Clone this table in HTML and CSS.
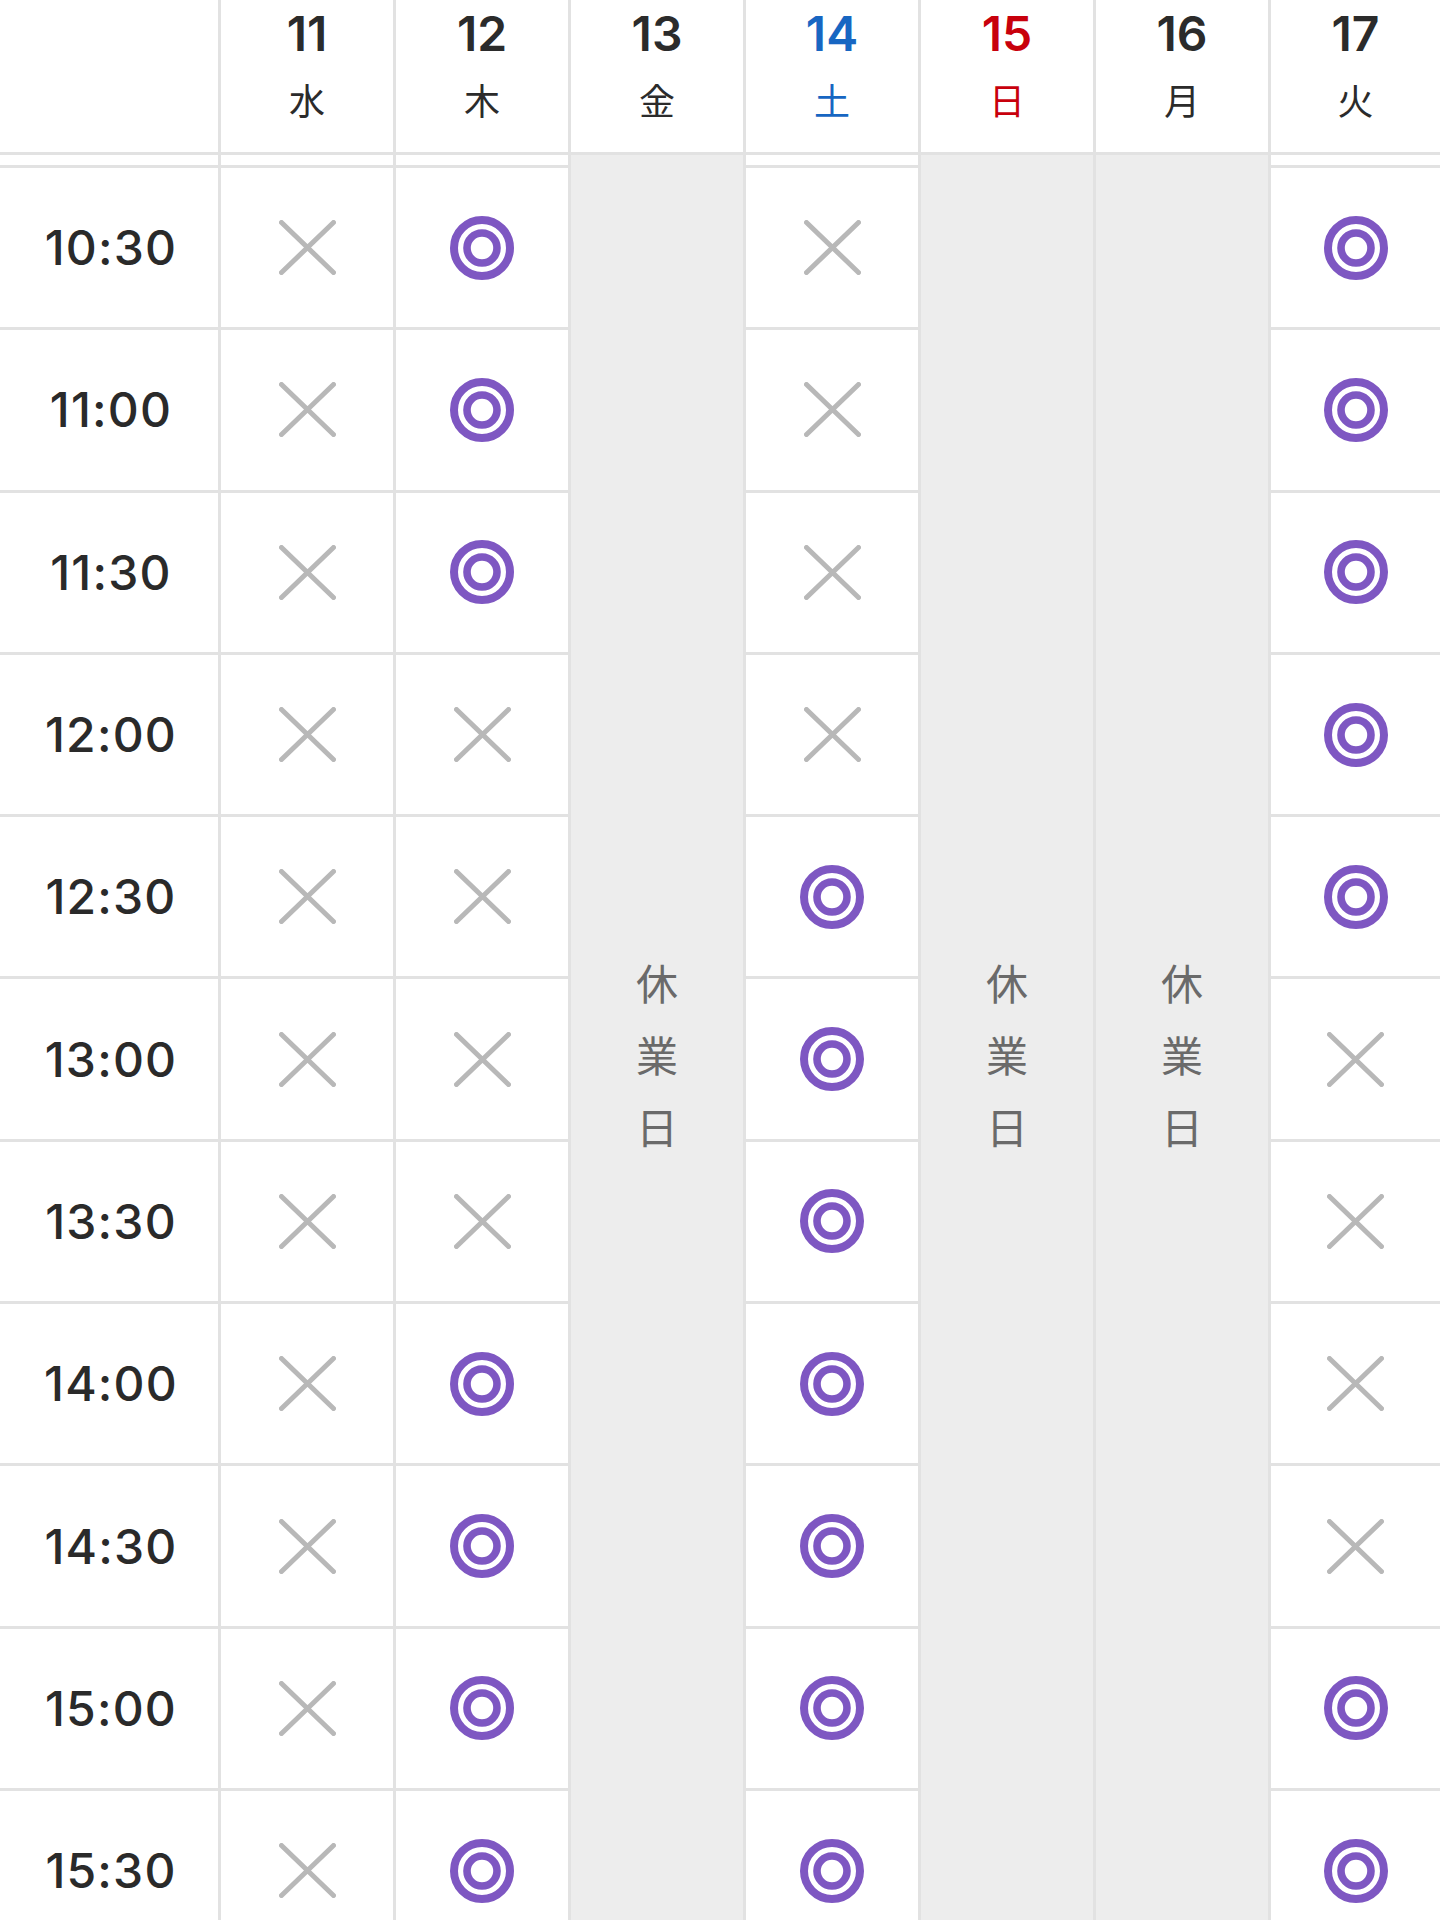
FILE: index.html
```html
<!DOCTYPE html>
<html lang="ja">
<head>
<meta charset="utf-8">
<title>予約状況</title>
<link rel="stylesheet" href="styles.css">
</head>
<body>
<div class="schedule">
  <div class="cell head"></div>
  <div class="cell head"><span class="day">11</span><span class="wd">水</span></div>
  <div class="cell head"><span class="day">12</span><span class="wd">木</span></div>
  <div class="cell head"><span class="day">13</span><span class="wd">金</span></div>
  <div class="cell head sat"><span class="day">14</span><span class="wd">土</span></div>
  <div class="cell head sun"><span class="day">15</span><span class="wd">日</span></div>
  <div class="cell head"><span class="day">16</span><span class="wd">月</span></div>
  <div class="cell head"><span class="day">17</span><span class="wd">火</span></div>

  <div class="closed col-13"><span>休</span><span>業</span><span>日</span></div>
  <div class="closed col-15"><span>休</span><span>業</span><span>日</span></div>
  <div class="closed col-16"><span>休</span><span>業</span><span>日</span></div>

  <div class="cell spacer"></div><div class="cell spacer"></div><div class="cell spacer"></div><div class="cell spacer"></div><div class="cell spacer"></div>

  <div class="cell time">10:30</div>
  <div class="cell"><svg class="ic-x" viewBox="0 0 57 55"><path d="M2.5 2.5L54.5 52.5M54.5 2.5L2.5 52.5"/></svg></div>
  <div class="cell"><svg class="ic-o" viewBox="0 0 64 64"><circle cx="32" cy="32" r="28"/><circle cx="32" cy="32" r="15"/></svg></div>
  <div class="cell"><svg class="ic-x" viewBox="0 0 57 55"><path d="M2.5 2.5L54.5 52.5M54.5 2.5L2.5 52.5"/></svg></div>
  <div class="cell"><svg class="ic-o" viewBox="0 0 64 64"><circle cx="32" cy="32" r="28"/><circle cx="32" cy="32" r="15"/></svg></div>

  <div class="cell time">11:00</div>
  <div class="cell"><svg class="ic-x" viewBox="0 0 57 55"><path d="M2.5 2.5L54.5 52.5M54.5 2.5L2.5 52.5"/></svg></div>
  <div class="cell"><svg class="ic-o" viewBox="0 0 64 64"><circle cx="32" cy="32" r="28"/><circle cx="32" cy="32" r="15"/></svg></div>
  <div class="cell"><svg class="ic-x" viewBox="0 0 57 55"><path d="M2.5 2.5L54.5 52.5M54.5 2.5L2.5 52.5"/></svg></div>
  <div class="cell"><svg class="ic-o" viewBox="0 0 64 64"><circle cx="32" cy="32" r="28"/><circle cx="32" cy="32" r="15"/></svg></div>

  <div class="cell time">11:30</div>
  <div class="cell"><svg class="ic-x" viewBox="0 0 57 55"><path d="M2.5 2.5L54.5 52.5M54.5 2.5L2.5 52.5"/></svg></div>
  <div class="cell"><svg class="ic-o" viewBox="0 0 64 64"><circle cx="32" cy="32" r="28"/><circle cx="32" cy="32" r="15"/></svg></div>
  <div class="cell"><svg class="ic-x" viewBox="0 0 57 55"><path d="M2.5 2.5L54.5 52.5M54.5 2.5L2.5 52.5"/></svg></div>
  <div class="cell"><svg class="ic-o" viewBox="0 0 64 64"><circle cx="32" cy="32" r="28"/><circle cx="32" cy="32" r="15"/></svg></div>

  <div class="cell time">12:00</div>
  <div class="cell"><svg class="ic-x" viewBox="0 0 57 55"><path d="M2.5 2.5L54.5 52.5M54.5 2.5L2.5 52.5"/></svg></div>
  <div class="cell"><svg class="ic-x" viewBox="0 0 57 55"><path d="M2.5 2.5L54.5 52.5M54.5 2.5L2.5 52.5"/></svg></div>
  <div class="cell"><svg class="ic-x" viewBox="0 0 57 55"><path d="M2.5 2.5L54.5 52.5M54.5 2.5L2.5 52.5"/></svg></div>
  <div class="cell"><svg class="ic-o" viewBox="0 0 64 64"><circle cx="32" cy="32" r="28"/><circle cx="32" cy="32" r="15"/></svg></div>

  <div class="cell time">12:30</div>
  <div class="cell"><svg class="ic-x" viewBox="0 0 57 55"><path d="M2.5 2.5L54.5 52.5M54.5 2.5L2.5 52.5"/></svg></div>
  <div class="cell"><svg class="ic-x" viewBox="0 0 57 55"><path d="M2.5 2.5L54.5 52.5M54.5 2.5L2.5 52.5"/></svg></div>
  <div class="cell"><svg class="ic-o" viewBox="0 0 64 64"><circle cx="32" cy="32" r="28"/><circle cx="32" cy="32" r="15"/></svg></div>
  <div class="cell"><svg class="ic-o" viewBox="0 0 64 64"><circle cx="32" cy="32" r="28"/><circle cx="32" cy="32" r="15"/></svg></div>

  <div class="cell time">13:00</div>
  <div class="cell"><svg class="ic-x" viewBox="0 0 57 55"><path d="M2.5 2.5L54.5 52.5M54.5 2.5L2.5 52.5"/></svg></div>
  <div class="cell"><svg class="ic-x" viewBox="0 0 57 55"><path d="M2.5 2.5L54.5 52.5M54.5 2.5L2.5 52.5"/></svg></div>
  <div class="cell"><svg class="ic-o" viewBox="0 0 64 64"><circle cx="32" cy="32" r="28"/><circle cx="32" cy="32" r="15"/></svg></div>
  <div class="cell"><svg class="ic-x" viewBox="0 0 57 55"><path d="M2.5 2.5L54.5 52.5M54.5 2.5L2.5 52.5"/></svg></div>

  <div class="cell time">13:30</div>
  <div class="cell"><svg class="ic-x" viewBox="0 0 57 55"><path d="M2.5 2.5L54.5 52.5M54.5 2.5L2.5 52.5"/></svg></div>
  <div class="cell"><svg class="ic-x" viewBox="0 0 57 55"><path d="M2.5 2.5L54.5 52.5M54.5 2.5L2.5 52.5"/></svg></div>
  <div class="cell"><svg class="ic-o" viewBox="0 0 64 64"><circle cx="32" cy="32" r="28"/><circle cx="32" cy="32" r="15"/></svg></div>
  <div class="cell"><svg class="ic-x" viewBox="0 0 57 55"><path d="M2.5 2.5L54.5 52.5M54.5 2.5L2.5 52.5"/></svg></div>

  <div class="cell time">14:00</div>
  <div class="cell"><svg class="ic-x" viewBox="0 0 57 55"><path d="M2.5 2.5L54.5 52.5M54.5 2.5L2.5 52.5"/></svg></div>
  <div class="cell"><svg class="ic-o" viewBox="0 0 64 64"><circle cx="32" cy="32" r="28"/><circle cx="32" cy="32" r="15"/></svg></div>
  <div class="cell"><svg class="ic-o" viewBox="0 0 64 64"><circle cx="32" cy="32" r="28"/><circle cx="32" cy="32" r="15"/></svg></div>
  <div class="cell"><svg class="ic-x" viewBox="0 0 57 55"><path d="M2.5 2.5L54.5 52.5M54.5 2.5L2.5 52.5"/></svg></div>

  <div class="cell time">14:30</div>
  <div class="cell"><svg class="ic-x" viewBox="0 0 57 55"><path d="M2.5 2.5L54.5 52.5M54.5 2.5L2.5 52.5"/></svg></div>
  <div class="cell"><svg class="ic-o" viewBox="0 0 64 64"><circle cx="32" cy="32" r="28"/><circle cx="32" cy="32" r="15"/></svg></div>
  <div class="cell"><svg class="ic-o" viewBox="0 0 64 64"><circle cx="32" cy="32" r="28"/><circle cx="32" cy="32" r="15"/></svg></div>
  <div class="cell"><svg class="ic-x" viewBox="0 0 57 55"><path d="M2.5 2.5L54.5 52.5M54.5 2.5L2.5 52.5"/></svg></div>

  <div class="cell time">15:00</div>
  <div class="cell"><svg class="ic-x" viewBox="0 0 57 55"><path d="M2.5 2.5L54.5 52.5M54.5 2.5L2.5 52.5"/></svg></div>
  <div class="cell"><svg class="ic-o" viewBox="0 0 64 64"><circle cx="32" cy="32" r="28"/><circle cx="32" cy="32" r="15"/></svg></div>
  <div class="cell"><svg class="ic-o" viewBox="0 0 64 64"><circle cx="32" cy="32" r="28"/><circle cx="32" cy="32" r="15"/></svg></div>
  <div class="cell"><svg class="ic-o" viewBox="0 0 64 64"><circle cx="32" cy="32" r="28"/><circle cx="32" cy="32" r="15"/></svg></div>

  <div class="cell time">15:30</div>
  <div class="cell"><svg class="ic-x" viewBox="0 0 57 55"><path d="M2.5 2.5L54.5 52.5M54.5 2.5L2.5 52.5"/></svg></div>
  <div class="cell"><svg class="ic-o" viewBox="0 0 64 64"><circle cx="32" cy="32" r="28"/><circle cx="32" cy="32" r="15"/></svg></div>
  <div class="cell"><svg class="ic-o" viewBox="0 0 64 64"><circle cx="32" cy="32" r="28"/><circle cx="32" cy="32" r="15"/></svg></div>
  <div class="cell"><svg class="ic-o" viewBox="0 0 64 64"><circle cx="32" cy="32" r="28"/><circle cx="32" cy="32" r="15"/></svg></div>
</div>
</body>
</html>
```

FILE: styles.css
```css
html, body {
  margin: 0;
  padding: 0;
  background: #ffffff;
}

body {
  font-family: "Inter", "Noto Sans CJK JP", sans-serif;
  color: #2b2b2b;
}

.schedule {
  display: grid;
  grid-template-columns: 218px repeat(6, 172px) 1fr;
  grid-template-rows: 152px 10px repeat(11, 159.3px);
  gap: 3px;
  width: 1440px;
  background: #e2e2e2;
}

.cell {
  background: #ffffff;
  display: flex;
  align-items: center;
  justify-content: center;
}

.head {
  flex-direction: column;
  justify-content: flex-start;
  padding-top: 10px;
  box-sizing: border-box;
}

.day {
  font-size: 48px;
  line-height: 48px;
  font-weight: 600;
  letter-spacing: 0;
}

.wd {
  font-family: "Noto Sans CJK JP", sans-serif;
  font-size: 36px;
  line-height: 40px;
  margin-top: 21px;
  font-weight: 400;
}

.sat { color: #1766c2; }
.sun { color: #c8000c; }

.spacer {
  background: #ffffff;
}

.time {
  font-size: 48px;
  font-weight: 500;
  letter-spacing: 1.2px;
  padding-left: 4px;
  color: #2a2a2a;
}

.closed {
  grid-row: 2 / span 12;
  background: #ededed;
  display: flex;
  flex-direction: column;
  align-items: center;
  justify-content: center;
  padding-top: 2px;
  box-sizing: border-box;
  font-family: "Noto Sans CJK JP", sans-serif;
  font-size: 42px;
  line-height: 72px;
  color: #6a6a6a;
}

.col-13 { grid-column: 4; }
.col-15 { grid-column: 6; }
.col-16 { grid-column: 7; }

.ic-x {
  width: 57px;
  height: 55px;
  fill: none;
  stroke: #b8b8b8;
  stroke-width: 5;
  stroke-linecap: round;
}

.ic-o {
  width: 64px;
  height: 64px;
  fill: none;
  stroke: #7e57c2;
  stroke-width: 8;
}

.ic-o circle + circle {
  stroke-width: 7.6;
}
```
